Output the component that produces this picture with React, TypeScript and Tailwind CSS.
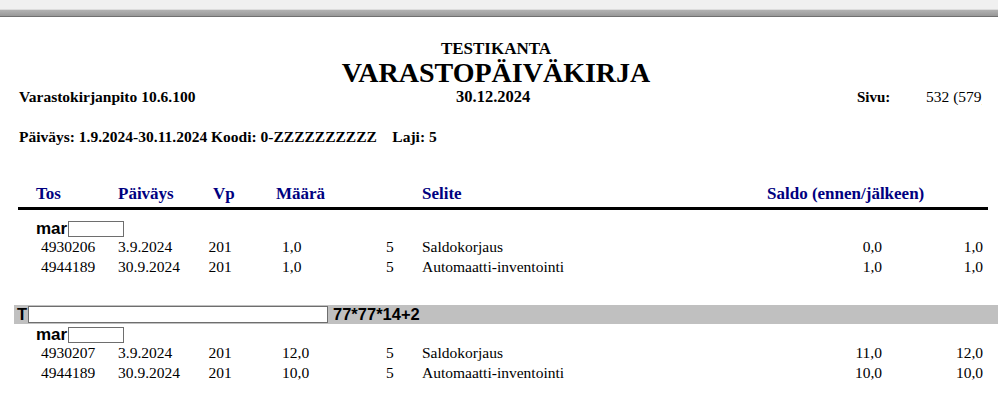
import React from "react";

const serif = "font-['Liberation_Serif','Times_New_Roman',serif]";
const sans = "font-['Liberation_Sans',Arial,sans-serif]";

type Row = { tos: string; date: string; vp: string; maara: string; laji: string; selite: string; s1: string; s2: string };

function DataRow({ r }: { r: Row }) {
  return (
    <div className="flex h-[20px] leading-[20px] text-[15.5px] text-black whitespace-nowrap pl-[41px]">
      <div className="w-[77px]">{r.tos}</div>
      <div className="w-[90.5px]">{r.date}</div>
      <div className="w-[73.5px]">{r.vp}</div>
      <div className="w-[104px]">{r.maara}</div>
      <div className="w-[36px]">{r.laji}</div>
      <div className="w-[361px]">{r.selite}</div>
      <div className="w-[99px] text-right">{r.s1}</div>
      <div className="w-[101px] text-right">{r.s2}</div>
    </div>
  );
}

function MarRow() {
  return (
    <div className={`flex items-start h-[16px] pl-[36px] ${sans}`}>
      <span className="text-[17px] leading-[17px] font-bold text-black -mt-[1px]">mar</span>
      <div className="w-[56px] h-[16px] bg-white border border-[#6e6e6e] ml-[1px]" />
    </div>
  );
}

export default function App() {
  const g1: Row[] = [
    { tos: "4930206", date: "3.9.2024", vp: "201", maara: "1,0", laji: "5", selite: "Saldokorjaus", s1: "0,0", s2: "1,0" },
    { tos: "4944189", date: "30.9.2024", vp: "201", maara: "1,0", laji: "5", selite: "Automaatti-inventointi", s1: "1,0", s2: "1,0" },
  ];
  const g2: Row[] = [
    { tos: "4930207", date: "3.9.2024", vp: "201", maara: "12,0", laji: "5", selite: "Saldokorjaus", s1: "11,0", s2: "12,0" },
    { tos: "4944189", date: "30.9.2024", vp: "201", maara: "10,0", laji: "5", selite: "Automaatti-inventointi", s1: "10,0", s2: "10,0" },
  ];

  return (
    <div className={`w-[998px] h-[397px] overflow-hidden bg-white ${serif} text-black`}>
      {/* top chrome */}
      <div className="h-[9px] bg-[#f0f0f0]" />
      <div className="h-[1px] bg-[#dcdcdc]" />
      <div className="h-[6px] bg-gradient-to-b from-[#b2b2b2] to-[#989898]" />
      <div className="h-[1px] bg-[#707070]" />

      {/* Title block */}
      <div className="w-[992px] mt-[22px] text-center font-bold text-[17px] leading-[20px]">TESTIKANTA</div>
      <div className="w-[992px] text-center font-bold text-[28px] leading-[28px] -mt-[0.5px]">VARASTOPÄIVÄKIRJA</div>

      <div className="flex h-[20px] leading-[20px] whitespace-nowrap pl-[19px]">
        <div className="w-[437px] font-bold text-[15.5px]">Varastokirjanpito 10.6.100</div>
        <div className="w-[78px] font-bold text-[16.5px]">30.12.2024</div>
        <div className="w-[323px]" />
        <div className="w-[69px] font-bold text-[15px]">Sivu:</div>
        <div className="w-[56px] overflow-hidden text-[15.5px]">532 (579)</div>
      </div>

      <div className="mt-[20px] h-[20px] leading-[20px] pl-[19px] font-bold text-[15.5px] whitespace-nowrap">
        Päiväys: 1.9.2024-30.11.2024 Koodi: 0-ZZZZZZZZZZ&nbsp;&nbsp;&nbsp; Laji: 5
      </div>

      {/* column header */}
      <div className="mt-[37.5px] flex h-[20px] leading-[20px] pl-[36px] font-bold text-[17px] text-[#000080] whitespace-nowrap">
        <div className="w-[82px]">Tos</div>
        <div className="w-[95px]">Päiväys</div>
        <div className="w-[63px]">Vp</div>
        <div className="w-[146px]">Määrä</div>
        <div className="w-[345px]">Selite</div>
        <div>Saldo (ennen/jälkeen)</div>
      </div>
      <div className="ml-[18px] w-[970px] mt-[2.5px] h-[3px] bg-black" />

      {/* group 1 */}
      <div className="mt-[11px]">
        <MarRow />
      </div>
      <div>
        {g1.map((r, i) => (
          <DataRow key={i} r={r} />
        ))}
      </div>

      {/* gray band */}
      <div className={`mt-[28px] ml-[14px] h-[19px] bg-[#c0c0c0] flex items-center ${sans}`}>
        <span className="font-bold text-[16.5px] leading-[19px] ml-[3px] w-[11px]">T</span>
        <div className="w-[300px] h-[17px] bg-white border border-[#6e6e6e]" />
        <span className="font-bold text-[16.5px] leading-[19px] ml-[5px]">77*77*14+2</span>
      </div>

      {/* group 2 */}
      <div className="mt-[3px]">
        <MarRow />
      </div>
      <div>
        {g2.map((r, i) => (
          <DataRow key={i} r={r} />
        ))}
      </div>
    </div>
  );
}
